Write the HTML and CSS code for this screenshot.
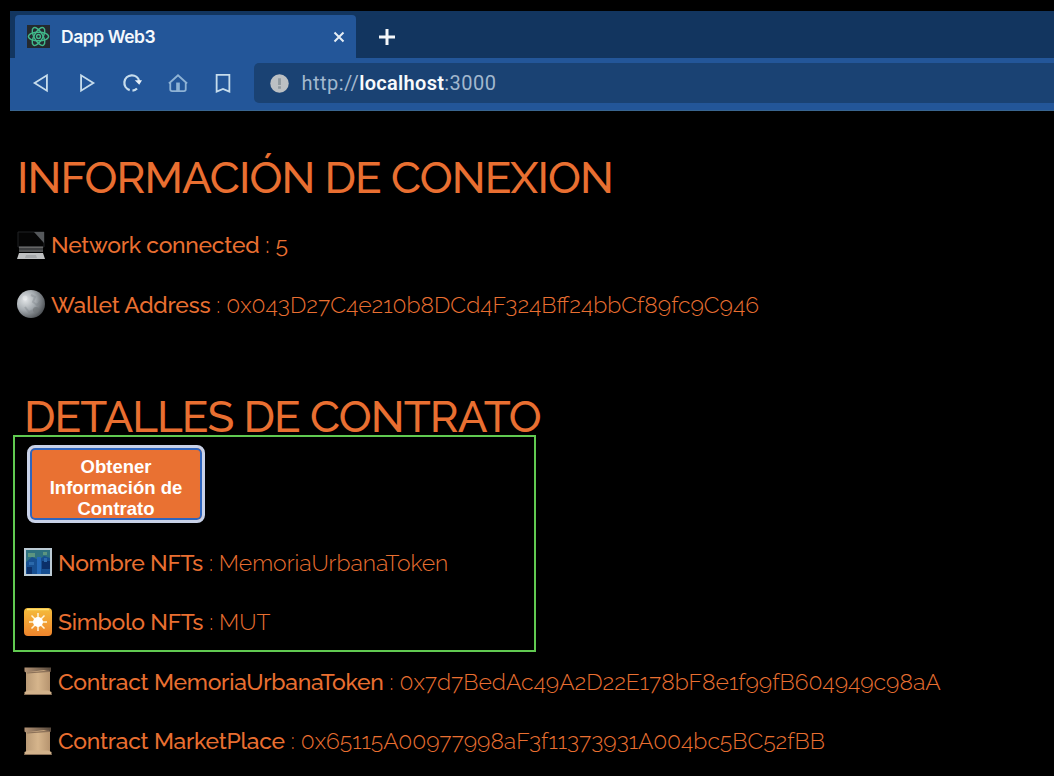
FILE: index.html
```html
<!DOCTYPE html>
<html lang="es">
<head>
<meta charset="utf-8">
<title>Dapp Web3</title>
<link rel="stylesheet" href="styles.css">
</head>
<body>
<svg class="defs" aria-hidden="true">
  <defs>
    <linearGradient id="paper" x1="0" x2="1"><stop offset="0" stop-color="#b99a76"/><stop offset=".5" stop-color="#d6b58c"/><stop offset="1" stop-color="#b6946f"/></linearGradient>
    <linearGradient id="roll" x1="0" x2="1"><stop offset="0" stop-color="#b39375"/><stop offset="1" stop-color="#57483b"/></linearGradient>
    <linearGradient id="sun" x1="0" y1="0" x2="0" y2="1"><stop offset="0" stop-color="#f5bd3c"/><stop offset="1" stop-color="#ee842c"/></linearGradient>
    <radialGradient id="moon" cx=".3" cy=".35" r=".75"><stop offset="0" stop-color="#e3e6e8"/><stop offset=".5" stop-color="#a5abb0"/><stop offset="1" stop-color="#4b4f53"/></radialGradient>
    <symbol id="scroll" viewBox="0 0 28 28" preserveAspectRatio="none">
      <path d="M2 3h24v22H2z" fill="url(#paper)"/>
      <path d="M.5.5H27V5L20 3 2 5.500.5 4.500z" fill="url(#roll)"/>
      <path d="M3 5.500 25 3.500v1.500L3 6.500z" fill="#8d7259"/>
      <path d="M.5 25 4 23.500h20l3.500 1.500v3H.5z" fill="#d1b18a"/>
      <path d="M.5 27.500h27" stroke="#8c7259"/>
    </symbol>
  </defs>
</svg>
<header class="browser">
  <div class="tabs">
    <div class="tab">
      <svg class="favicon" viewBox="0 0 24 24"><rect width="24" height="24" fill="#24292f"/><g fill="none" stroke="#41b88a" stroke-width="1.500"><ellipse cx="12" cy="12" rx="10.500" ry="4.500"/><ellipse cx="12" cy="12" rx="10.500" ry="4.500" transform="rotate(60 12 12)"/><ellipse cx="12" cy="12" rx="10.500" ry="4.500" transform="rotate(120 12 12)"/><circle cx="12" cy="12" r="2"/></g></svg>
      <span class="tab-title">Dapp Web3</span>
      <svg class="close" viewBox="0 0 12 12"><path d="M1.500 1.500l9 9M10.500 1.500l-9 9"/></svg>
    </div>
    <svg class="new-tab" viewBox="0 0 18 18"><path d="M9 1v16M1 9h16"/></svg>
  </div>
  <div class="toolbar">
    <nav class="nav">
      <svg viewBox="0 0 22 22"><path d="M17.500 2.500v17L4 11z"/></svg>
      <svg viewBox="0 0 22 22"><path d="M4.500 2.500v17L18 11z"/></svg>
      <svg viewBox="0 0 22 22"><path d="M8.500 18.800A8.300 8.300 0 1 1 19 9M16.500 17a8.300 8.300 0 0 1-5 2.300" stroke-width="2.500"/><path class="solid" d="M14 8h8l-3 5z"/></svg>
      <svg class="dim" viewBox="0 0 22 22"><path d="M1 11.500 11 2.500l10 9M2.500 11v7q0 2 2 2h13q2 0 2-2v-7"/><path class="bar" d="M11 10.500V20"/></svg>
      <svg viewBox="0 0 22 22"><path d="M4 2h14v18.500l-7-3-7 3z"/></svg>
    </nav>
    <div class="address">
      <svg class="info" viewBox="0 0 20 20"><circle cx="10" cy="10" r="9.700" fill="#bcc0c3"/><path d="M10 4.500v7M10 13v2.500" stroke="#8f989e" stroke-width="3"/></svg>
      <span class="url">http://<b>localhost</b>:3000</span>
    </div>
  </div>
</header>
<main>
  <section class="connection">
    <h1>INFORMACIÓN DE CONEXION</h1>
    <p class="row">
      <svg class="icon" viewBox="0 0 28 28"><path d="M1 1h26v15H1z" fill="#050505" stroke="#202224"/><path d="M17 1h10v11z" fill="#55585b"/><path d="M2 15h24v6H2z" fill="#3d3f41"/><path d="M2 16.500h24M2 20h24" stroke="#666"/><path d="M2 22h24l2 6H0z" fill="#bfc0c1"/><path d="M9 24h10l1 3H8z" fill="#a6a8aa"/></svg>
      <span class="label">Network connected</span><span class="value strong">: 5</span>
    </p>
    <p class="row">
      <svg class="icon" viewBox="0 0 28 28"><circle cx="14" cy="14" r="14" fill="url(#moon)"/><path d="M14 5l4 2-2 5 4 3 4-4M8 17l4 5 5-2" fill="none" stroke="#777d83" stroke-width="2" opacity=".35"/><circle cx="8" cy="8" r="2.500" fill="#fff" opacity=".3"/><circle cx="19" cy="20" r="3" fill="#707478" opacity=".6"/></svg>
      <span class="label">Wallet Address</span><span class="value">: 0x043D27C4e210b8DCd4F324Bff24bbCf89fc9C946</span>
    </p>
  </section>
  <section class="details">
    <h1>DETALLES DE CONTRATO</h1>
    <button class="fetch">Obtener<br>Información de<br>Contrato</button>
    <p class="row">
      <svg class="icon" viewBox="0 0 28 28"><path d="M0 0h28v28H0z" fill="#bccbd5"/><path d="M2 2h24v24H2z" fill="#174f91"/><path d="M2 2h24v8l-6-2-5 4-7-3-6 5z" fill="#2e7180"/><path d="M4 5h7v4H4zM19 4h4v3h-4z" fill="#5c9580"/><path d="M13 9h4v17h-4z" fill="#2569b8"/><path d="M18 13h8v8h-8zM3 19h5v7H3z" fill="#0b2f68"/><path d="M5 14h5v3H5zM20 10h3v4h-3z" fill="#2b69ab"/></svg>
      <span class="label">Nombre NFTs</span><span class="value">: MemoriaUrbanaToken</span>
    </p>
    <p class="row">
      <svg class="icon" viewBox="0 0 28 28"><rect width="28" height="28" rx="4" fill="url(#sun)"/><path d="M3 1.500h22" stroke="#ffe071" stroke-width="1.500"/><path d="M14 5v18M5 14h18M7.500 7.500l13 13M20.500 7.500l-13 13" stroke="#fff6dc" stroke-width="1.500"/><circle cx="14" cy="14" r="5" fill="#fff"/></svg>
      <span class="label">Simbolo NFTs</span><span class="value">: MUT</span>
    </p>
    <p class="row">
      <svg class="icon"><use href="#scroll"/></svg>
      <span class="label">Contract MemoriaUrbanaToken</span><span class="value">: 0x7d7BedAc49A2D22E178bF8e1f99fB604949c98aA</span>
    </p>
    <p class="row">
      <svg class="icon"><use href="#scroll"/></svg>
      <span class="label">Contract MarketPlace</span><span class="value">: 0x65115A00977998aF3f11373931A004bc5BC52fBB</span>
    </p>
    <div class="highlight"></div>
  </section>
</main>
</body>
</html>
```
FILE: styles.css
```css
* { box-sizing: border-box; }
body { margin: 0; background: #000; height: 776px; overflow: hidden; color: #e96f31; font-family: Raleway, Lato, sans-serif; }
.defs { position: absolute; width: 0; height: 0; }
.browser { margin: 11px 0 0 10px; height: 100px; background: #235699; border-bottom: 1px solid #39658f; }
.tabs { height: 47px; background: #12355f; display: flex; padding: 4px 0 0 5px; }
.tab { width: 341px; height: 43px; background: #235699; border-radius: 4px 4px 0 0; display: flex; align-items: center; padding: 0 11px 0 12px; }
.favicon { width: 23px; height: 23px; }
.tab-title { color: #f4f8fc; font: 600 17.500px/24px Inter, sans-serif; margin: 0 auto 0 11px; letter-spacing: -0.450px; }
.close { width: 12px; height: 12px; stroke: #e5edf5; stroke-width: 2; }
.new-tab { width: 18px; height: 18px; margin: 13px 0 0 22px; stroke: #f4f7fa; stroke-width: 3; }
.toolbar { display: flex; height: 52px; padding-top: 5px; }
.nav { display: flex; width: 244px; padding: 10px 0 0 21px; gap: 25.500px; }
.nav svg { width: 20px; height: 20px; flex: none; fill: none; stroke: #c6dcec; stroke-width: 2; }
.nav .dim { stroke: #8fb3d5; }
.nav .bar { stroke-width: 4; }
.nav .solid { fill: #e8f1f8; stroke: none; }
.address { flex: 1; height: 40px; border-radius: 5px 0 0 5px; background: #1a4273; display: flex; align-items: center; padding-left: 16px; gap: 12.500px; }
.info { width: 19px; height: 19px; }
.url { color: #a2b8ce; font: 400 20px/26px Roboto, sans-serif; letter-spacing: 0.460px; }
.url b { color: #f7fafc; font-weight: 600; letter-spacing: 0.300px; }
h1 { margin: 0; font-size: 44px; font-weight: 500; line-height: 52px; letter-spacing: -0.930px; white-space: nowrap; }
.connection { padding: 41px 0 0 17px; }
.connection h1 { height: 63px; }
.row { margin: 0; height: 59.400px; display: flex; align-items: center; white-space: nowrap; font-size: 22.900px; line-height: 30px; }
.icon { width: 28px; height: 28px; flex: none; margin-right: 6px; }
.label, .value { padding-top: 1px; }
.label { font-weight: 500; margin-right: 6px; letter-spacing: -0.260px; }
.value { font-weight: 300; font-variant-numeric: oldstyle-nums; }
.value.strong { font-weight: 400; }
.details { position: relative; padding: 57px 0 0 24px; }
.details h1 { height: 54px; }
.fetch { display: block; width: 178px; height: 78px; margin-left: 3px; border: 3px solid #c9d2e8; border-radius: 8px; background: #e97132; box-shadow: inset 0 0 0 2px #2e65be; color: #fff; font: 700 18.500px/21px "Liberation Sans", sans-serif; padding: 8px 0 0; white-space: nowrap; }
.fetch + .row { margin-top: 10px; }
.highlight { position: absolute; left: 13px; top: 101px; width: 523px; height: 217px; border: 2px solid #61ca51; }
```
